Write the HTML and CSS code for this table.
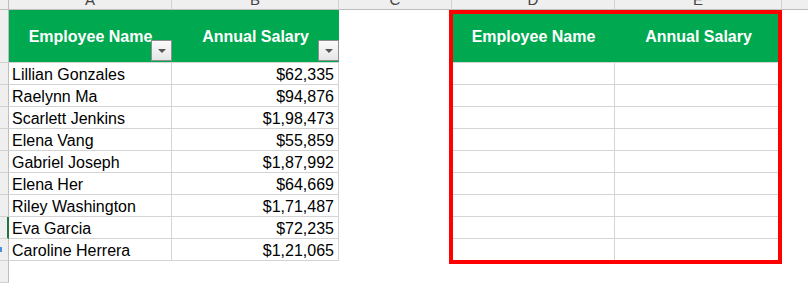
FILE: index.html
```html
<!DOCTYPE html>
<html lang="en">
<head>
<meta charset="utf-8">
<title>Sheet</title>
<link rel="stylesheet" href="styles.css">
</head>
<body>
<div class="sheet">
  <div class="corner"></div>
  <div class="colhead"><span>A</span></div>
  <div class="colhead"><span>B</span></div>
  <div class="colhead"><span>C</span></div>
  <div class="colhead"><span>D</span></div>
  <div class="colhead"><span>E</span></div>
  <div class="colhead last"></div>

  <div class="rowhead"></div>
  <div class="hcell">Employee Name<span class="filter"><i></i></span></div>
  <div class="hcell">Annual Salary<span class="filter"><i></i></span></div>
  <div class="blank"></div>
  <div class="hcell">Employee Name</div>
  <div class="hcell end">Annual Salary</div>
  <div class="blank"></div>

  <div class="rowhead"></div><div class="cell">Lillian Gonzales</div><div class="cell num">$62,335</div><div class="blank"></div><div class="cell"></div><div class="cell"></div><div class="blank"></div>
  <div class="rowhead"></div><div class="cell">Raelynn Ma</div><div class="cell num">$94,876</div><div class="blank"></div><div class="cell"></div><div class="cell"></div><div class="blank"></div>
  <div class="rowhead"></div><div class="cell">Scarlett Jenkins</div><div class="cell num">$1,98,473</div><div class="blank"></div><div class="cell"></div><div class="cell"></div><div class="blank"></div>
  <div class="rowhead"></div><div class="cell">Elena Vang</div><div class="cell num">$55,859</div><div class="blank"></div><div class="cell"></div><div class="cell"></div><div class="blank"></div>
  <div class="rowhead"></div><div class="cell">Gabriel Joseph</div><div class="cell num">$1,87,992</div><div class="blank"></div><div class="cell"></div><div class="cell"></div><div class="blank"></div>
  <div class="rowhead"></div><div class="cell">Elena Her</div><div class="cell num">$64,669</div><div class="blank"></div><div class="cell"></div><div class="cell"></div><div class="blank"></div>
  <div class="rowhead"></div><div class="cell">Riley Washington</div><div class="cell num">$1,71,487</div><div class="blank"></div><div class="cell"></div><div class="cell"></div><div class="blank"></div>
  <div class="rowhead selected"></div><div class="cell">Eva Garcia</div><div class="cell num">$72,235</div><div class="blank"></div><div class="cell"></div><div class="cell"></div><div class="blank"></div>
  <div class="rowhead"><span class="dot"></span></div><div class="cell">Caroline Herrera</div><div class="cell num">$1,21,065</div><div class="blank"></div><div class="cell"></div><div class="cell"></div><div class="blank"></div>
  <div class="rowhead"></div><div class="blank"></div><div class="blank"></div><div class="blank"></div><div class="blank"></div><div class="blank"></div><div class="blank"></div>

  <div class="redbox"></div>
</div>
</body>
</html>
```
FILE: styles.css
```css
* { box-sizing: border-box; }
html, body { margin: 0; padding: 0; background: #fff; }
body { width: 808px; height: 290px; overflow: hidden; font-family: "Liberation Sans", Arial, sans-serif; }

.sheet {
  position: relative;
  display: grid;
  grid-template-columns: 9px 163px 167px 113px 163px 167px 1fr;
  grid-template-rows: 10px 53px repeat(9, 22px) 22px;
  width: 808px;
}

.corner {
  background: #efefef;
  border-right: 1px solid #bdbdbd;
  border-bottom: 1px solid #bdbdbd;
}
.colhead {
  background: #efefef;
  border-right: 1px solid #d2d2d2;
  border-bottom: 1px solid #bdbdbd;
  overflow: hidden;
  display: flex;
  align-items: flex-end;
  justify-content: center;
  padding-bottom: 2px;
  color: #444;
  font-size: 15px;
}
.colhead span { line-height: 15px; display: block; }
.colhead.last { border-right: none; }

.rowhead {
  background: #efefef;
  border-right: 1px solid #bdbdbd;
  border-bottom: 1px solid #d2d2d2;
  position: relative;
}
.rowhead.selected { border-right: 2px solid #217346; }
.dot {
  position: absolute;
  left: 0;
  top: 8px;
  width: 2px;
  height: 5px;
  background: #4a90d9;
}

.hcell {
  position: relative;
  background: #00a94f;
  color: #fff;
  font-weight: bold;
  font-size: 16px;
  display: flex;
  align-items: center;
  justify-content: center;
  padding-top: 1px;
  border-bottom: 1px solid #d4d4d4;
}
.filter {
  position: absolute;
  right: 0;
  bottom: 1px;
  width: 21px;
  height: 21px;
  border: 1px solid #8f8f8f;
  background: linear-gradient(#fbfbfb, #e6e6e6);
  display: flex;
  align-items: center;
  justify-content: center;
}
.filter i {
  display: block;
  width: 0;
  height: 0;
  border-left: 4px solid transparent;
  border-right: 4px solid transparent;
  border-top: 4px solid #555;
  margin-top: 1px;
}

.cell {
  border-right: 1px solid #d4d4d4;
  border-bottom: 1px solid #d4d4d4;
  font-size: 16px;
  color: #000;
  display: flex;
  align-items: flex-end;
  padding: 0 4px 0 3px;
  line-height: 18px;
  white-space: nowrap;
  overflow: hidden;
}
.cell.num { justify-content: flex-end; }
.blank { background: #fff; }

.redbox {
  position: absolute;
  left: 449px;
  top: 10px;
  width: 333px;
  height: 254px;
  border: 4px solid #ff0000;
  pointer-events: none;
}
```
